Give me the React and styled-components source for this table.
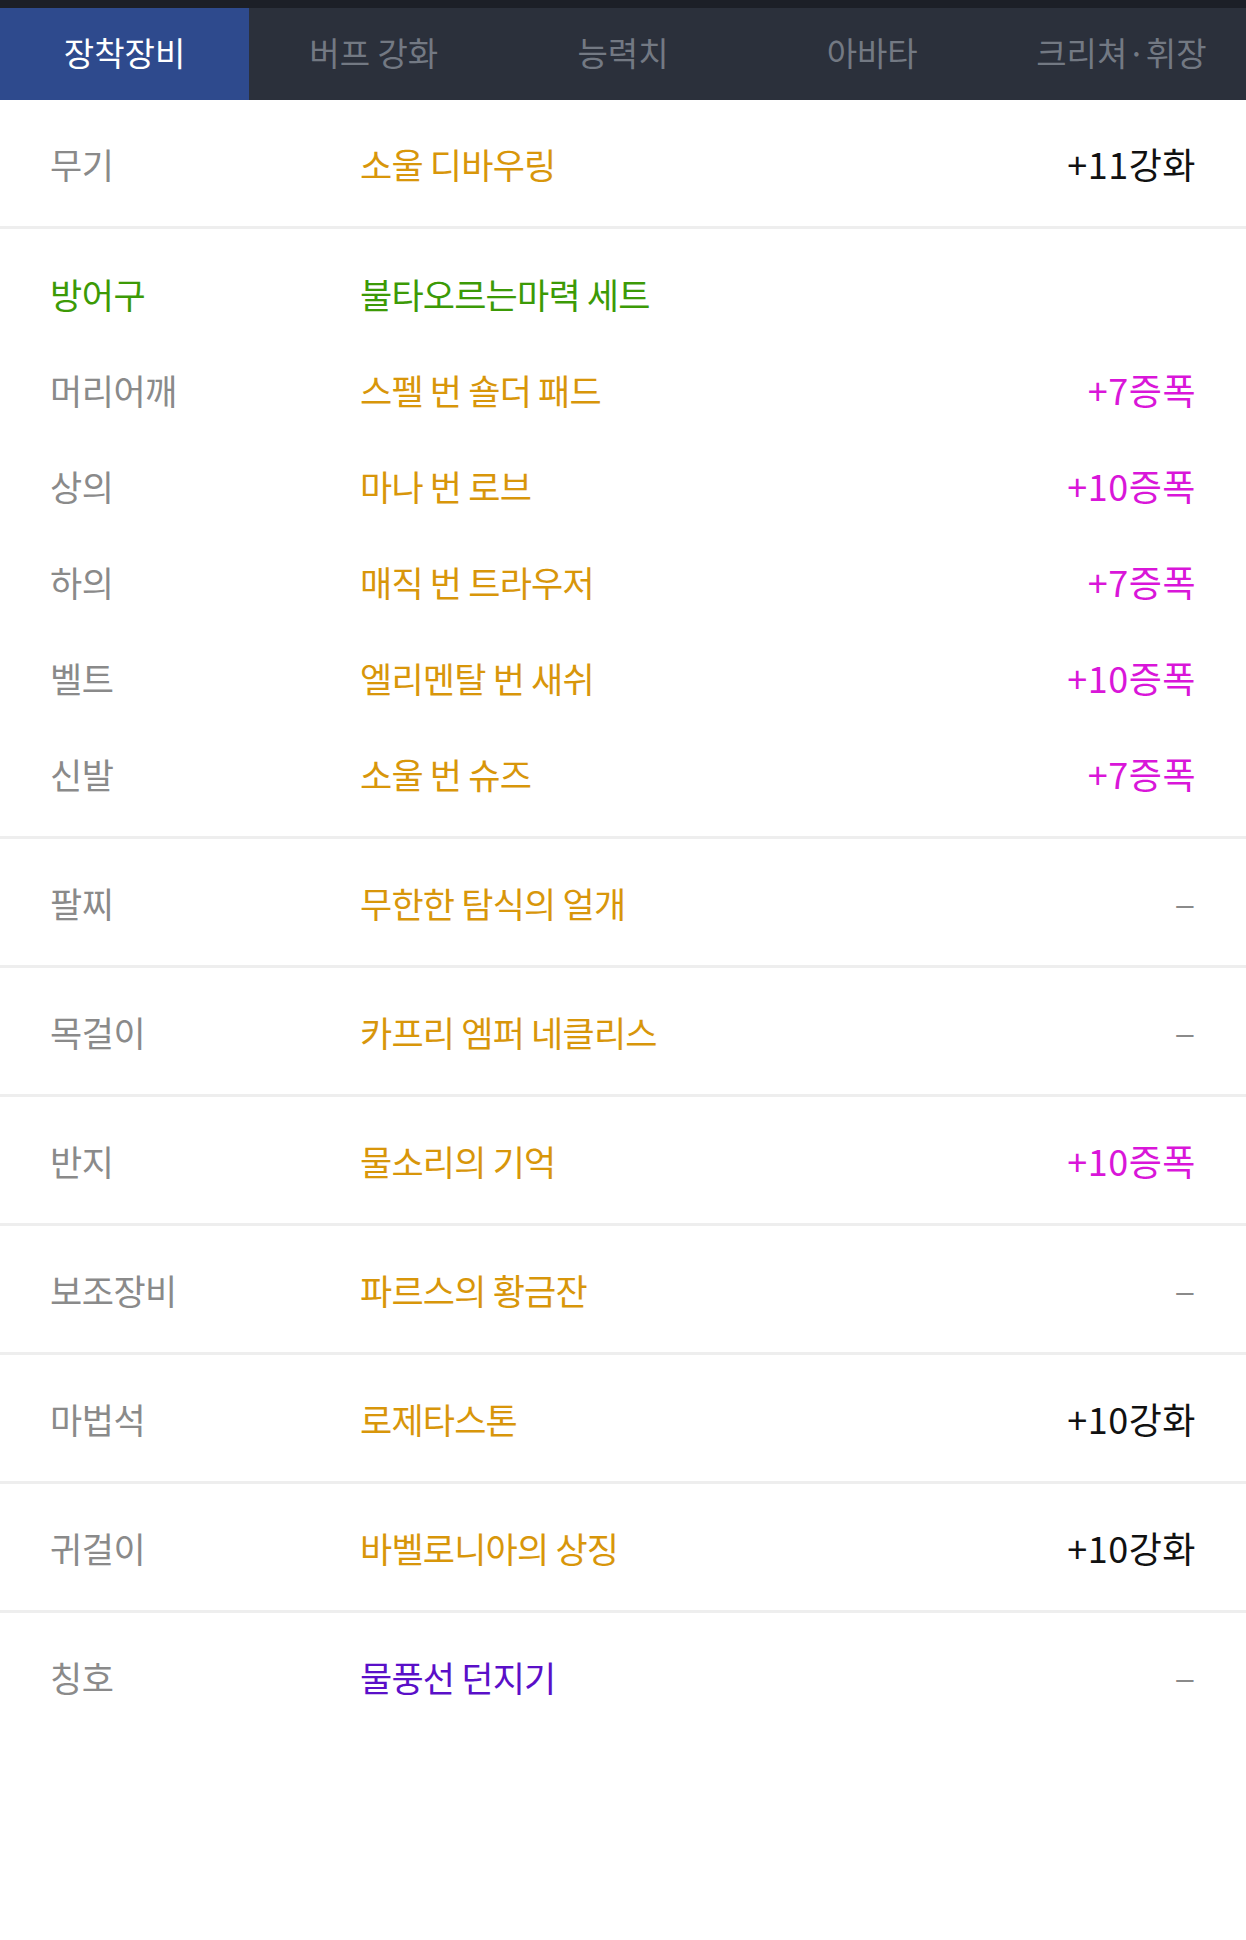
import styled, { createGlobalStyle } from "styled-components";

//------------------------------------------------------------------->

const GlobalStyle = createGlobalStyle`
  html, body {
    margin: 0;
    padding: 0;
    background: #ffffff;
  }
  body {
    font-family: "Noto Sans CJK KR", "Noto Sans", sans-serif;
  }
`;

const Page = styled.div`
  width: 1246px;
  min-height: 1940px;
  background: #ffffff;
`;

const TopStrip = styled.div`
  height: 8px;
  background: #1c1f27;
`;

const TabBar = styled.nav`
  display: grid;
  grid-template-columns: repeat(5, 1fr);
  height: 92px;
  background: #2b303b;
`;

const Tab = styled.div`
  display: flex;
  align-items: center;
  justify-content: center;
  padding-bottom: 4px;
  font-size: 33px;
  color: ${({ $active }) => ($active ? "#ffffff" : "#737983")};
  background: ${({ $active }) => ($active ? "#2e4a8d" : "transparent")};
`;

const List = styled.div`
  display: flex;
  flex-direction: column;
`;

const Section = styled.section`
  display: flex;
  flex-direction: column;
  padding: ${({ $group }) => ($group ? "16px 0 15px" : "0")};
  border-bottom: ${({ $last }) => ($last ? "none" : "3px solid #eeeeee")};
`;

const Line = styled.div`
  display: grid;
  grid-template-columns: 310px 1fr auto;
  align-items: center;
  height: ${({ $h }) => $h}px;
  padding: 0 50px 0 50px;
`;

const Label = styled.span`
  font-size: 35px;
  letter-spacing: -0.5px;
  color: ${({ $color }) => $color || "#8a8a8a"};
`;

const ItemName = styled.span`
  font-size: 35px;
  letter-spacing: -0.8px;
  color: ${({ $color }) => $color || "#d8960a"};
`;

const Value = styled.span`
  font-size: 36px;
  letter-spacing: 0.5px;
  text-align: right;
  color: ${({ $tone }) =>
    $tone === "amp" ? "#d916d9" : $tone === "none" ? "#8a8a8a" : "#111111"};
`;

const Dash = styled.span`
  display: inline-block;
  padding: 0 2px 9px 0;
  font-family: "Liberation Sans", sans-serif;
  font-size: 31px;
  color: #8a8a8a;
`;

//------------------------------------------------------------------->

const tabs = ["장착장비", "버프 강화", "능력치", "아바타", "크리쳐·휘장"];

const armor = [
  { slot: "머리어깨", name: "스펠 번 숄더 패드", value: "+7증폭", tone: "amp" },
  { slot: "상의", name: "마나 번 로브", value: "+10증폭", tone: "amp" },
  { slot: "하의", name: "매직 번 트라우저", value: "+7증폭", tone: "amp" },
  { slot: "벨트", name: "엘리멘탈 번 새쉬", value: "+10증폭", tone: "amp" },
  { slot: "신발", name: "소울 번 슈즈", value: "+7증폭", tone: "amp" },
];

const singles = [
  { slot: "팔찌", name: "무한한 탐식의 얼개", tone: "none" },
  { slot: "목걸이", name: "카프리 엠퍼 네클리스", tone: "none" },
  { slot: "반지", name: "물소리의 기억", value: "+10증폭", tone: "amp" },
  { slot: "보조장비", name: "파르스의 황금잔", tone: "none" },
  { slot: "마법석", name: "로제타스톤", value: "+10강화", tone: "reinforce" },
  { slot: "귀걸이", name: "바벨로니아의 상징", value: "+10강화", tone: "reinforce" },
  { slot: "칭호", name: "물풍선 던지기", tone: "none", color: "#5a0fc8" },
];

function ValueCell({ value, tone }) {
  if (tone === "none")
    return (
      <Value $tone="none">
        <Dash>–</Dash>
      </Value>
    );
  return <Value $tone={tone}>{value}</Value>;
}

export default function App() {
  return (
    <Page>
      <GlobalStyle />
      <TopStrip />
      <TabBar>
        {tabs.map((t, i) => (
          <Tab key={t} $active={i === 0}>
            {t}
          </Tab>
        ))}
      </TabBar>
      <List>
        <Section>
          <Line $h={126}>
            <Label>무기</Label>
            <ItemName>소울 디바우링</ItemName>
            <Value>+11강화</Value>
          </Line>
        </Section>
        <Section $group>
          <Line $h={96}>
            <Label $color="#3c9a06">방어구</Label>
            <ItemName $color="#3c9a06">불타오르는마력 세트</ItemName>
            <span />
          </Line>
          {armor.map((a) => (
            <Line key={a.slot} $h={96}>
              <Label>{a.slot}</Label>
              <ItemName>{a.name}</ItemName>
              <ValueCell value={a.value} tone={a.tone} />
            </Line>
          ))}
        </Section>
        {singles.map((s, i) => (
          <Section key={s.slot} $last={i === singles.length - 1}>
            <Line $h={126}>
              <Label>{s.slot}</Label>
              <ItemName $color={s.color}>{s.name}</ItemName>
              <ValueCell value={s.value} tone={s.tone} />
            </Line>
          </Section>
        ))}
      </List>
    </Page>
  );
}
